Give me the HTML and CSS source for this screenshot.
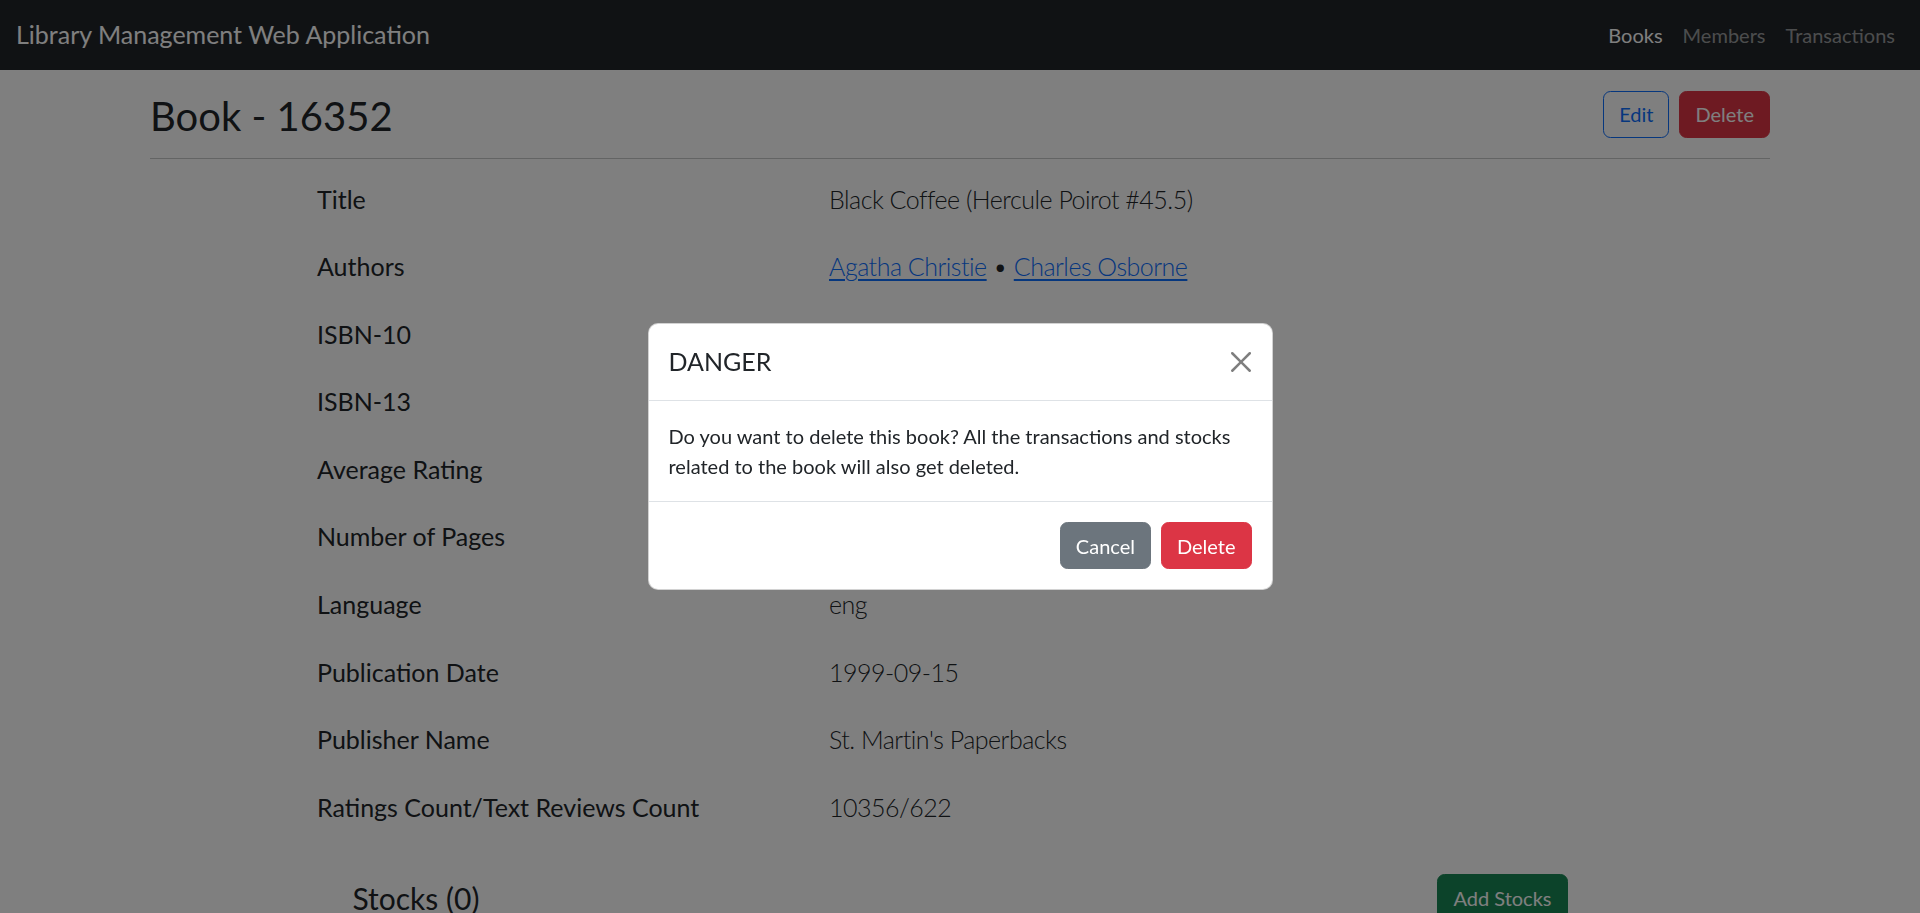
FILE: index.html
```html
<!DOCTYPE html>
<html lang="en">
<head>
<meta charset="utf-8">
<title>Library Management Web Application</title>
<link rel="stylesheet" href="styles.css">
</head>
<body class="modal-open">
  <nav class="navbar">
    <a class="navbar-brand" href="#">Library Management Web Application</a>
    <ul class="navbar-nav">
      <li><a class="nav-link active" href="#">Books</a></li>
      <li><a class="nav-link" href="#">Members</a></li>
      <li><a class="nav-link" href="#">Transactions</a></li>
    </ul>
  </nav>

  <main class="container">
    <div class="page-head">
      <h2 class="page-title">Book - 16352</h2>
      <div class="actions">
        <button class="btn btn-outline-primary">Edit</button>
        <button class="btn btn-danger">Delete</button>
      </div>
    </div>
    <hr class="divider">

    <div class="details">
      <div class="detail-row"><div class="label">Title</div><div class="value">Black Coffee (Hercule Poirot #45.5)</div></div>
      <div class="detail-row"><div class="label">Authors</div><div class="value"><a href="#" class="link">Agatha Christie</a> <span class="sep">•</span> <a href="#" class="link">Charles Osborne</a></div></div>
      <div class="detail-row"><div class="label">ISBN-10</div><div class="value">0312970021</div></div>
      <div class="detail-row"><div class="label">ISBN-13</div><div class="value">9780312970024</div></div>
      <div class="detail-row"><div class="label">Average Rating</div><div class="value">3.63</div></div>
      <div class="detail-row"><div class="label">Number of Pages</div><div class="value">242</div></div>
      <div class="detail-row"><div class="label">Language</div><div class="value">eng</div></div>
      <div class="detail-row"><div class="label">Publication Date</div><div class="value">1999-09-15</div></div>
      <div class="detail-row"><div class="label">Publisher Name</div><div class="value">St. Martin's Paperbacks</div></div>
      <div class="detail-row"><div class="label">Ratings Count/Text Reviews Count</div><div class="value">10356/622</div></div>
    </div>

    <section class="stocks">
      <h4 class="stocks-title">Stocks (0)</h4>
      <button class="btn btn-success">Add Stocks</button>
    </section>
  </main>

  <div class="modal-backdrop"></div>
  <div class="modal">
    <div class="modal-dialog">
      <div class="modal-header">
        <h5 class="modal-title">DANGER</h5>
        <button class="btn-close" aria-label="Close">
          <svg viewBox="0 0 16 16" width="20" height="20"><path d="M.293.293a1 1 0 0 1 1.414 0L8 6.586 14.293.293a1 1 0 1 1 1.414 1.414L9.414 8l6.293 6.293a1 1 0 0 1-1.414 1.414L8 9.414l-6.293 6.293a1 1 0 0 1-1.414-1.414L6.586 8 .293 1.707a1 1 0 0 1 0-1.414z"/></svg>
        </button>
      </div>
      <div class="modal-body">Do you want to delete this book? All the transactions and stocks related to the book will also get deleted.</div>
      <div class="modal-footer">
        <button class="btn btn-secondary">Cancel</button>
        <button class="btn btn-danger">Delete</button>
      </div>
    </div>
  </div>
</body>
</html>
```
FILE: styles.css
```css
* { box-sizing: border-box; }

body {
  margin: 0;
  font-family: Lato, Roboto, "Liberation Sans", sans-serif;
  font-size: 20px;
  line-height: 1.5;
  color: #212529;
  background: #fff;
}
body.modal-open { overflow: hidden; }

/* navbar */
.navbar {
  height: 70px;
  background: #212529;
  display: flex;
  align-items: center;
  justify-content: space-between;
  padding: 10px 15px;
}
.navbar-brand {
  color: #fff;
  font-size: 25px;
  line-height: 37.5px;
  padding: 6px 0;
  text-decoration: none;
  margin-left: 1px;
}
.navbar-nav {
  list-style: none;
  margin: 0;
  padding: 0;
  display: flex;
}
.nav-link {
  display: block;
  padding: 10px 10px;
  color: rgba(255,255,255,.55);
  text-decoration: none;
  font-size: 20px;
  line-height: 30px;
}
.nav-link.active { color: #fff; }

/* container */
.container {
  max-width: 1650px;
  margin: 0 auto;
  padding: 0 15px;
}
.page-head {
  margin-top: 20px;
  display: flex;
  align-items: center;
  justify-content: space-between;
}
.page-title {
  margin: 0;
  font-size: 40px;
  font-weight: 400;
  line-height: 44px;
  padding-top: 4px;
}
.actions { display: flex; gap: 10px; }

.divider {
  margin: 20px 0;
  border: 0;
  border-top: 1px solid rgba(33,37,41,.25);
}

/* buttons */
.btn {
  font-family: inherit;
  font-size: 20px;
  line-height: 30px;
  padding: 7.5px 15px;
  border: 1.25px solid transparent;
  border-radius: 7.5px;
  background: transparent;
  cursor: pointer;
}
.btn-outline-primary { color: #0d6efd; border-color: #0d6efd; }
.btn-danger { color: #fff; background: #dc3545; border-color: #dc3545; }
.btn-secondary { color: #fff; background: #6c757d; border-color: #6c757d; }
.btn-success { color: #fff; background: #198754; border-color: #198754; }

/* details */
.details { padding: 1.5px 0 0 167px; }
.detail-row {
  display: grid;
  grid-template-columns: 512px 1fr;
  font-size: 25px;
  line-height: 37.5px;
  padding-bottom: 30.1px;
}
.value {
  font-weight: 300;
  letter-spacing: -0.5px;
}
.link { color: #0d6efd; text-decoration: underline; text-underline-offset: 3px; }
.sep { letter-spacing: 0; }

/* stocks */
.stocks {
  margin: 18px 202.5px 0;
  display: flex;
  align-items: center;
  justify-content: space-between;
}
.stocks-title {
  margin: 0;
  font-size: 30px;
  font-weight: 400;
  line-height: 36px;
}

/* modal */
.modal-backdrop {
  position: fixed;
  inset: 0;
  background: #000;
  opacity: .5;
}
.modal {
  position: fixed;
  inset: 0;
  display: flex;
  align-items: center;
  justify-content: center;
}
.modal-dialog {
  width: 625px;
  background: #fff;
  border: 1px solid rgba(0,0,0,.175);
  border-radius: 10px;
}
.modal-header {
  display: flex;
  align-items: center;
  justify-content: space-between;
  padding: 19.5px 20px;
  border-bottom: 1px solid #dee2e6;
}
.modal-title {
  margin: 0;
  font-size: 25px;
  font-weight: 400;
  line-height: 37.5px;
}
.btn-close {
  width: 30px;
  height: 30px;
  padding: 5px;
  margin: -10px -4.5px -10px auto;
  border: 0;
  background: transparent;
  opacity: .5;
  display: flex;
  align-items: center;
  justify-content: center;
  cursor: pointer;
}
.btn-close svg { display: block; fill: #000; }
.modal-body {
  padding: 20px;
  font-size: 20px;
  line-height: 30px;
}
.modal-footer {
  display: flex;
  justify-content: flex-end;
  align-items: center;
  padding: 15px;
  border-top: 1px solid #dee2e6;
}
.modal-footer .btn { margin: 5px; }
```
